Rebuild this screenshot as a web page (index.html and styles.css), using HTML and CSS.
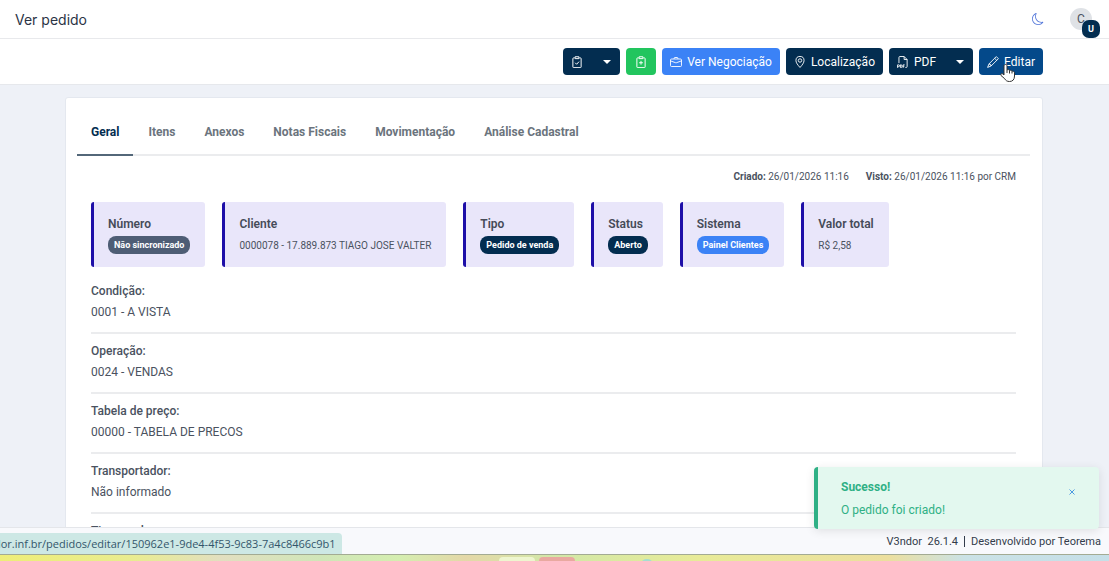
FILE: index.html
```
<!DOCTYPE html>
<html lang="pt-BR">
<head>
    <meta charset="UTF-8">
    <meta name="viewport" content="width=device-width,initial-scale=1.0">
    <title>Ver pedido</title>
    <link rel="stylesheet" href="styles.css">
</head>
<body>
    <header class="topbar">
        <h1>Ver pedido</h1>
        <div class="topbar-tools">
            <button class="theme-toggle" aria-label="Modo escuro">
                <svg width="12" height="12" viewBox="0 0 16 16" fill="currentColor"><path d="M6 .278a.77.77 0 0 1 .08.858 7.2 7.2 0 0 0-.878 3.46c0 4.021 3.278 7.277 7.318 7.277q.792-.001 1.533-.16a.79.79 0 0 1 .81.316.73.73 0 0 1-.031.893A8.35 8.35 0 0 1 8.344 16C3.734 16 0 12.286 0 7.71 0 4.266 2.114 1.312 5.124.06A.75.75 0 0 1 6 .278M4.858 1.311A7.27 7.27 0 0 0 1.025 7.71c0 4.02 3.279 7.276 7.319 7.276a7.32 7.32 0 0 0 5.205-2.162q-.506.063-1.029.063c-4.61 0-8.343-3.714-8.343-8.29 0-1.167.242-2.278.681-3.286"/></svg>
            </button>
            <div class="avatar">C<span class="avatar-badge">U</span></div>
        </div>
    </header>

    <div class="actions">
        <div class="split">
            <button class="btn btn-dark" aria-label="Aprovar">
                <svg width="12" height="12" viewBox="0 0 16 16" fill="none" stroke="currentColor" stroke-width="1.3"><path d="M5 2.5H3.5a1 1 0 0 0-1 1v11a1 1 0 0 0 1 1h9a1 1 0 0 0 1-1v-11a1 1 0 0 0-1-1H11M5.5 1h5v2.5h-5zM5.5 9l2 2 3.2-3.5"/></svg>
            </button>
            <button class="btn btn-dark btn-caret" aria-label="Mais opções"><span class="caret"></span></button>
        </div>
        <button class="btn btn-green" aria-label="Novo pedido">
            <svg width="12" height="12" viewBox="0 0 16 16" fill="none" stroke="currentColor" stroke-width="1.3"><path d="M5 2.5H3.5a1 1 0 0 0-1 1v11a1 1 0 0 0 1 1h9a1 1 0 0 0 1-1v-11a1 1 0 0 0-1-1H11M5.5 1h5v2.5h-5zM8 6.5v5M5.5 9h5"/></svg>
        </button>
        <button class="btn btn-blue">
            <svg width="12" height="12" viewBox="0 0 16 16" fill="none" stroke="currentColor" stroke-width="1.2"><path d="M2 4h12a1.3 1.3 0 0 1 1.3 1.3v7.4A1.3 1.3 0 0 1 14 14H2a1.3 1.3 0 0 1-1.3-1.3V5.3A1.3 1.3 0 0 1 2 4zM5.5 4V3a1 1 0 0 1 1-1h3a1 1 0 0 1 1 1v1M.7 6.5 7.6 9q.4.1.8 0l6.9-2.5"/></svg>
            Ver Negociação
        </button>
        <button class="btn btn-dark">
            <svg width="12" height="12" viewBox="0 0 16 16" fill="none" stroke="currentColor" stroke-width="1.2"><path d="M8 15.3C5 12 2.6 9 2.6 6a5.4 5.4 0 0 1 10.800 0c0 3-2.400 6-5.400 9.300z"/><circle cx="8" cy="6" r="2.3"/></svg>
            Localização
        </button>
        <div class="split">
            <button class="btn btn-dark">
                <svg width="12" height="12" viewBox="0 0 16 16" fill="none" stroke="currentColor" stroke-width="1.2"><path d="M2.6 9.500V2a1.300 1.300 0 0 1 1.300-1.300h5.600l4 4V14a1.300 1.300 0 0 1-1.300 1.300h-1M9.500.7v4h4M.8 15.800v-4h1.400a1.100 1.100 0 0 1 0 2.400H.8M4.500 11.800v3.500h.7a1.750 1.750 0 0 0 0-3.500zM8.200 15.800v-4h2M8.200 13.700h1.600"/></svg>
                PDF
            </button>
            <button class="btn btn-dark btn-caret" aria-label="Opções de PDF"><span class="caret"></span></button>
        </div>
        <button class="btn btn-edit">
            <svg width="12" height="12" viewBox="0 0 16 16" fill="none" stroke="currentColor" stroke-width="1.2"><path d="M12.4.8 15.2 3.6 5.5 13.3.8 15.2 2.7 10.5zM10.2 3l2.8 2.8M2.7 10.500h1.300v1.500h1.500v1.300"/></svg>
            Editar
        </button>
    </div>

    <main class="content">
        <section class="card">
            <nav class="tabs">
                <a class="tab active" href="#geral">Geral</a>
                <a class="tab" href="#itens">Itens</a>
                <a class="tab" href="#anexos">Anexos</a>
                <a class="tab" href="#notas">Notas Fiscais</a>
                <a class="tab" href="#movimentacao">Movimentação</a>
                <a class="tab" href="#analise">Análise Cadastral</a>
            </nav>
            <div class="panel" id="geral">
                <div class="dates">
                    <span><b>Criado:</b> 26/01/2026 11:16</span>
                    <span><b>Visto:</b> 26/01/2026 11:16 por CRM</span>
                </div>
                <div class="tiles">
                    <div class="tile"><h2>Número</h2><span class="badge badge-gray">Não sincronizado</span></div>
                    <div class="tile"><h2>Cliente</h2><p>0000078 - 17.889.873 TIAGO JOSE VALTER</p></div>
                    <div class="tile"><h2>Tipo</h2><span class="badge">Pedido de venda</span></div>
                    <div class="tile"><h2>Status</h2><span class="badge">Aberto</span></div>
                    <div class="tile"><h2>Sistema</h2><span class="badge badge-blue">Painel Clientes</span></div>
                    <div class="tile"><h2>Valor total</h2><p>R$ 2,58</p></div>
                </div>
                <dl class="details">
                    <div><dt>Condição:</dt><dd>0001 - A VISTA</dd></div>
                    <div><dt>Operação:</dt><dd>0024 - VENDAS</dd></div>
                    <div><dt>Tabela de preço:</dt><dd>00000 - TABELA DE PRECOS</dd></div>
                    <div><dt>Transportador:</dt><dd>Não informado</dd></div>
                    <div><dt>Tipo venda:</dt></div>
                </dl>
            </div>
        </section>
    </main>

    <footer class="footer">
        <span>V3ndor&nbsp; 26.1.4</span>
        <span class="divider"></span>
        <span>Desenvolvido por Teorema</span>
    </footer>
    <div class="taskbar">
        <span class="task task-light"></span>
        <span class="task task-red"></span>
        <span class="task-dot"></span>
    </div>

    <div class="link-status">dor.inf.br/pedidos/editar/150962e1-9de4-4f53-9c83-7a4c8466c9b1</div>

    <div class="toast" role="status">
        <div>
            <strong>Sucesso!</strong>
            <p>O pedido foi criado!</p>
        </div>
        <button class="toast-close" aria-label="Fechar">
            <svg width="6" height="6" viewBox="0 0 6 6" stroke="currentColor"><path d="M.5.5l5 5M5.5.5l-5 5"/></svg>
        </button>
    </div>

    <svg class="cursor" width="16" height="20" viewBox="0 0 16 20" fill="#fff" stroke="#333" stroke-linejoin="round"><path d="M5.5 1.5c1 0 1.5.6 1.5 1.5v4c.6-.7 2.2-.5 2.5.5.8-.6 2.2-.2 2.4.8.9-.4 2.6 0 2.6 1.5v3.2c0 3.500-1.800 5.500-5 5.500-2.500 0-3.800-1-4.800-2.800L1 12.500c-.7-1.300.6-2.500 1.800-1.600L4 12V3c0-.9.6-1.500 1.500-1.500z"/><path d="M7 7v3M9.500 7.500v3M12 8.500v2" fill="none"/></svg>
</body>
</html>
```
FILE: styles.css
```
* {
    box-sizing: border-box;
}
body {
    margin: 0;
    height: 100vh;
    display: flex;
    flex-direction: column;
    overflow: hidden;
    background: #eef1f7;
    color: #4a5260;
    font-family: Roboto, "Liberation Sans", sans-serif;
    font-size: 11px;
}
h1, h2, p, dl, dd {
    margin: 0;
}
button {
    font: inherit;
    border: 0;
    padding: 0;
    cursor: pointer;
}
/* Top bar */
.topbar {
    flex: none;
    display: flex;
    justify-content: space-between;
    align-items: center;
    height: 39px;
    padding: 0 17px 0 15px;
    background: #fff;
    border-bottom: 1px solid #e8e9ec;
}
.topbar h1 {
    font-family: Inter, sans-serif;
    font-size: 14px;
    font-weight: 400;
    color: #2b3445;
}
.topbar-tools {
    display: flex;
    align-items: center;
    gap: 26px;
}
.theme-toggle {
    display: flex;
    background: none;
    color: #4f74d9;
}
.avatar {
    position: relative;
    width: 22px;
    height: 22px;
    border-radius: 50%;
    background: #dfe2e6;
    color: #4a5260;
    font-size: 12px;
    line-height: 22px;
    text-align: center;
}
.avatar-badge {
    position: absolute;
    left: 12px;
    top: 12px;
    width: 18px;
    height: 18px;
    border-radius: 7px;
    background: #032d50;
    color: #fff;
    font-size: 9px;
    font-weight: 700;
    line-height: 18px;
}
/* Action buttons */
.actions {
    flex: none;
    display: flex;
    justify-content: flex-end;
    align-items: center;
    gap: 6px;
    height: 46px;
    padding: 0 66px;
    background: #fff;
    border-bottom: 1px solid #e6e8ec;
}
.split {
    display: flex;
}
.btn {
    display: flex;
    align-items: center;
    gap: 5px;
    height: 27px;
    padding: 0 8px;
    border-radius: 4px;
    color: #fff;
    font-size: 12px;
}
.btn-dark {
    background: #032d50;
}
.btn-green {
    padding: 0 9px;
    background: #22c55e;
}
.btn-blue {
    background: #3b82f6;
}
.btn-edit {
    background: #04498a;
}
.split .btn:first-child {
    border-radius: 4px 0 0 4px;
}
.split .btn-caret {
    padding: 0 9px 0 12px;
    border-radius: 0 4px 4px 0;
}
.caret {
    border: 4px solid transparent;
    border-top-color: #fff;
    border-bottom: 0;
}
/* Card */
.content {
    flex: 1;
    min-height: 0;
    padding: 12px 66px 0 65px;
    overflow: hidden;
}
.card {
    padding: 12px 12px 12px 11px;
    background: #fff;
    border: 1px solid #e4e8ef;
    border-radius: 3px;
}
.tabs {
    display: flex;
    gap: 1px;
    border-bottom: 2px solid #ebecee;
}
.tab {
    height: 46px;
    margin-bottom: -2px;
    padding: 0 14px;
    border-bottom: 2px solid transparent;
    color: #6b747d;
    font-size: 12px;
    font-weight: 700;
    line-height: 44px;
    text-decoration: none;
}
.tab.active {
    color: #032d50;
    border-bottom-color: #536779;
}
.panel {
    padding: 13px 14px;
}
.dates {
    display: flex;
    justify-content: flex-end;
    gap: 17px;
    font-size: 10px;
    line-height: 16px;
}
/* Summary tiles */
.tiles {
    display: flex;
    flex-wrap: wrap;
    gap: 17px;
    margin-top: 17px;
}
.tile {
    height: 65px;
    padding: 13px 15px 13px 14px;
    background: #e9e6fa;
    border-left: 3px solid #1e0fa8;
    border-radius: 3px;
}
.tile h2 {
    font-size: 12px;
    font-weight: 600;
    line-height: 18px;
    color: #454b58;
}
.tile p {
    font-size: 10px;
    line-height: 25px;
}
.badge {
    display: block;
    margin-top: 3px;
    padding: 0 6px;
    border-radius: 8px;
    background: #032d50;
    color: #fff;
    font-size: 9px;
    font-weight: 700;
    line-height: 18px;
}
.badge-gray {
    background: #4e5d75;
}
.badge-blue {
    background: #3b82f6;
}
/* Order details */
.details {
    margin-top: 7px;
    font-size: 12px;
}
.details div {
    height: 60px;
    padding-top: 7px;
    border-bottom: 2px solid #ebecee;
    line-height: 21px;
}
.details dt {
    font-weight: 500;
}
/* Footer */
.footer {
    flex: none;
    display: flex;
    justify-content: flex-end;
    align-items: center;
    gap: 6px;
    height: 27px;
    padding: 0 8px;
    background: #f8f9fc;
    border-top: 1px solid #e4e6ea;
    color: #333c4b;
}
.divider {
    width: 1px;
    height: 11px;
    background: #333c4b;
}
.taskbar {
    flex: none;
    display: flex;
    height: 7px;
    padding: 2px 0 0 45%;
    overflow: hidden;
    border-top: 1px solid #a3ab93;
    background: linear-gradient(90deg, #eeee78 0%, #e9ec90 12%, #e2dfc0 20%, #d0e6b8 29%, #d5eeb0 36%, #e4d8a8 42%, #d2e8a8 50%, #e8eb98 63%, #ecdf9e 80%, #cbe2e6 87%, #c5dfe8 100%);
}
.task {
    width: 36px;
    height: 10px;
    border-radius: 4px;
}
.task-light {
    background: #eef6cf;
}
.task-red {
    margin-left: 4px;
    background: #e9a9a0;
}
.task-dot {
    width: 12px;
    height: 10px;
    margin: 2px 0 0 66px;
    border-radius: 50%;
    background: #a5ded2;
}
/* Browser link preview */
.link-status {
    position: absolute;
    left: 0;
    bottom: 7px;
    padding-right: 6px;
    border-radius: 0 4px 0 0;
    background: #cde8e5;
    color: #33566b;
    font-family: "Open Sans", "Noto Sans", sans-serif;
    font-size: 11px;
    line-height: 21px;
    text-indent: -6px;
}
/* Toast */
.toast {
    position: absolute;
    right: 10px;
    bottom: 32px;
    display: flex;
    justify-content: space-between;
    align-items: center;
    width: 285px;
    height: 62px;
    padding: 2px 24px 0 23px;
    background: #e3f8ef;
    border-left: 4px solid #2fb085;
    border-radius: 4px;
    box-shadow: 0 2px 10px rgba(0,0,0,0.1);
    color: #2fb085;
    font-size: 12px;
    line-height: 23px;
}
.toast-close {
    display: flex;
    margin-bottom: 14px;
    background: none;
    color: #4d9be0;
}
/* Pointer */
.cursor {
    position: absolute;
    left: 1000px;
    top: 63px;
}
```
